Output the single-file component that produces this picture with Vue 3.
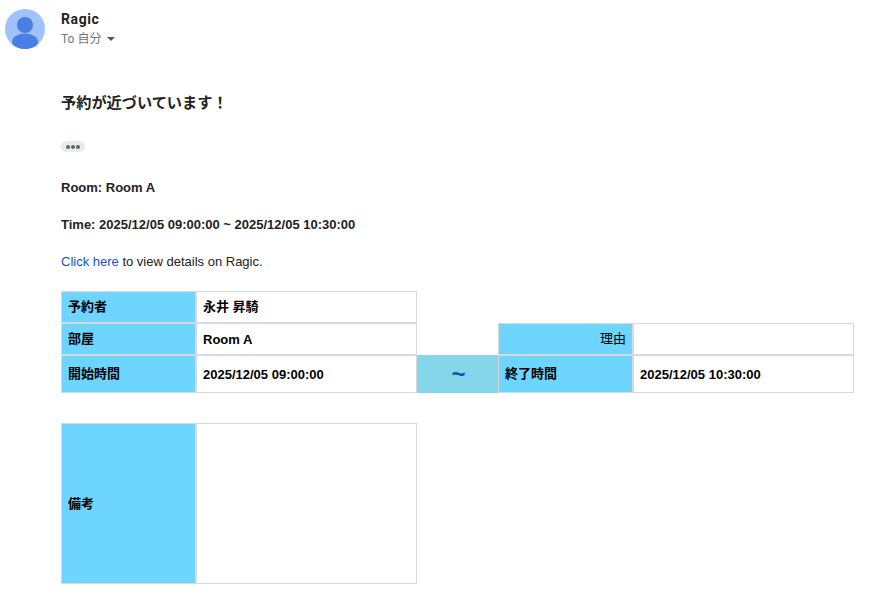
<script setup>
const rows = [
  { label: '予約者', value: '永井 昇騎' },
];
</script>

<template>
  <div class="mail">
    <header class="head">
      <svg class="avatar" width="40" height="40" viewBox="0 0 40 40">
        <defs><clipPath id="c"><circle cx="20" cy="20" r="20" /></clipPath></defs>
        <circle cx="20" cy="20" r="20" fill="#a0c3ff" />
        <g clip-path="url(#c)">
          <circle cx="20" cy="16" r="8" fill="#4a7fe3" />
          <ellipse cx="20" cy="33" rx="13" ry="8.5" fill="#4a7fe3" />
        </g>
      </svg>
      <div class="who">
        <div class="sender">Ragic</div>
        <div class="to">To 自分 <span class="caret"></span></div>
      </div>
    </header>
    <main class="body">
      <h1 class="title">予約が近づいています！</h1>
      <div class="more"><i></i><i></i><i></i></div>
      <p class="line strong">Room: Room A</p>
      <p class="line strong">Time: 2025/12/05 09:00:00 ~ 2025/12/05 10:30:00</p>
      <p class="line"><a class="link">Click here</a> to view details on Ragic.</p>

      <div class="grid">
        <div class="cell label cjk">{{ rows[0].label }}</div>
        <div class="cell value cjk">{{ rows[0].value }}</div>
        <div class="gap-cell"></div>
        <div class="gap-cell"></div>
        <div class="gap-cell"></div>

        <div class="cell label cjk">部屋</div>
        <div class="cell value">Room A</div>
        <div class="gap-cell"></div>
        <div class="cell label plain cjk">理由</div>
        <div class="cell value"></div>

        <div class="cell label cjk">開始時間</div>
        <div class="cell value">2025/12/05 09:00:00</div>
        <div class="tilde">~</div>
        <div class="cell label cjk">終了時間</div>
        <div class="cell value">2025/12/05 10:30:00</div>
      </div>

      <div class="notes">
        <div class="cell label cjk">備考</div>
        <div class="cell value"></div>
      </div>
    </main>
  </div>
</template>

<style scoped>
.mail {
  width: 874px;
  height: 598px;
  overflow: hidden;
  background: #fff;
  color: #222;
  font-family: "Liberation Sans", Arial, "Noto Sans CJK JP", sans-serif;
}
.head {
  display: flex;
  padding: 9px 0 0 5px;
  height: 49px;
  box-sizing: border-box;
}
.avatar { display: block; }
.who { margin-left: 16px; }
.sender {
  font-family: Roboto, "Liberation Sans", sans-serif;
  font-size: 14px;
  font-weight: 700;
  line-height: 20px;
  letter-spacing: 0.6px;
  color: #1f1f1f;
}
.to {
  font-family: Roboto, "Noto Sans CJK JP", sans-serif;
  font-size: 12px;
  line-height: 20px;
  color: #6f7379;
  display: flex;
  align-items: center;
  gap: 3px;
}
.caret {
  margin-left: 3px;
  width: 0;
  height: 0;
  border: 4px solid transparent;
  border-top: 4px solid #555;
  border-bottom: 0;
}
.body { padding-left: 61px; }
.title {
  margin: 44px 0 0;
  font-size: 15.2px;
  font-weight: 700;
  line-height: 20px;
  color: #222;
}
.more {
  margin-top: 28px;
  width: 24px;
  height: 11px;
  border-radius: 6px;
  background: #e8eaed;
  display: flex;
  align-items: center;
  justify-content: center;
  gap: 1px;
}
.more i {
  width: 4px;
  height: 4px;
  border-radius: 50%;
  background: #5f6368;
}
.line {
  margin: 0;
  font-size: 13px;
  line-height: 17px;
  height: 37px;
  color: #222;
}
.more + .line { margin-top: 27px; }
.strong { font-weight: 700; }
.link { color: #1155cc; }
.grid {
  margin-top: 1px;
  display: grid;
  width: 793px;
  grid-template-columns: 135px 221px 81px 135px 221px;
  grid-template-rows: 32px 32px 38px;
}
.cell {
  box-sizing: border-box;
  border: 1px solid #d9d9d9;
  padding: 0 6px;
  display: flex;
  align-items: center;
  font-size: 13px;
  font-weight: 700;
  color: #000;
}
.cjk { padding-bottom: 3px; }
.label { background: #6dd5ff; }
.value { background: #fff; }
.plain {
  font-weight: 400;
  justify-content: flex-end;
}
.tilde {
  background: #85d6ea;
  color: #0b57b0;
  font-size: 24px;
  font-weight: 700;
  padding-left: 2px;
  display: flex;
  align-items: center;
  justify-content: center;
}
.notes {
  margin-top: 30px;
  display: grid;
  width: 356px;
  grid-template-columns: 135px 221px;
  height: 161px;
}
</style>
